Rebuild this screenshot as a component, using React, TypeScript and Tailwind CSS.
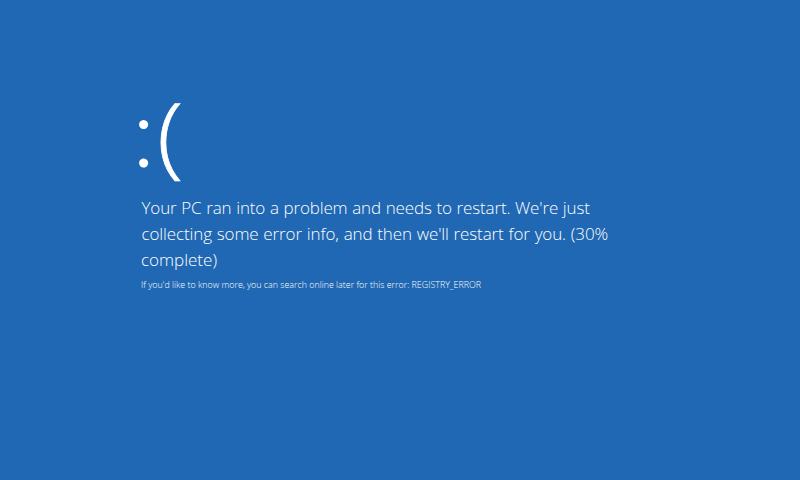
export default function App() {
  return (
    <main className="h-[480px] w-[800px] overflow-hidden bg-[#2068b3] pt-[96px] pl-[141px] font-['Open_Sans','Noto_Sans',sans-serif] font-light text-white">
      <h1 className="-ml-[9px] flex h-[99px] font-light whitespace-nowrap">
        <span className="-mt-[9px] w-[25px] font-['Lato',sans-serif] text-[97px] leading-[86px] font-light">:</span>
        <span className="-mt-[6px] origin-left scale-x-110 text-[88px] leading-[86px] [-webkit-text-stroke:0.7px_white]">(</span>
      </h1>
      <div className="text-[17px] leading-[26px] whitespace-nowrap">
        <p className="pl-[0.5px] tracking-[-0.15px] [word-spacing:0.5px]">Your PC ran into a problem and needs to restart. We're just</p>
        <p className="pl-[0.5px] tracking-[-0.11px] [word-spacing:0.5px]">collecting some error info, and then we'll restart for you. (30%</p>
        <p>complete)</p>
      </div>
      <p className="mt-[5px] text-[8.9px] leading-[14px] whitespace-nowrap">If you'd like to know more, you can search online later for this error: REGISTRY_ERROR</p>
    </main>
  );
}
